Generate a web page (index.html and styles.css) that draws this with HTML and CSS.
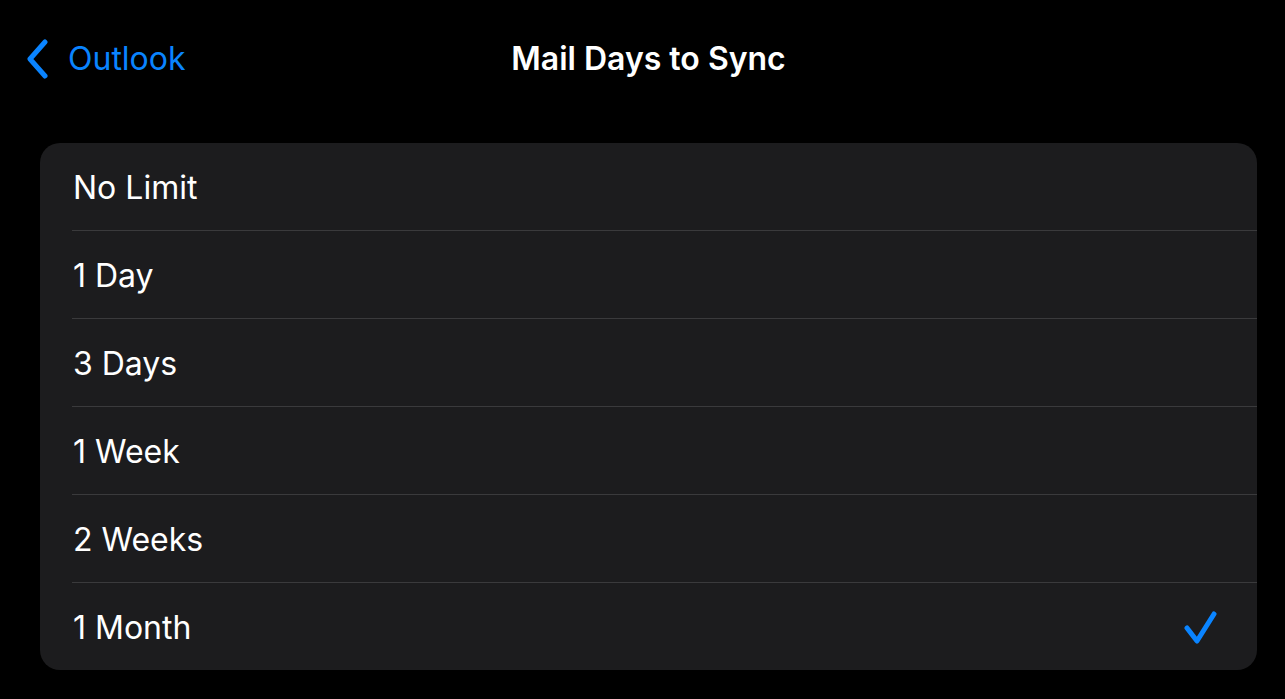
FILE: index.html
```html
<!DOCTYPE html>
<html>
<head>
<meta charset="utf-8">
<link rel="stylesheet" href="styles.css">
</head>
<body>
<div class="screen">
  <header class="navbar">
    <a class="back">
      <svg class="chev" width="24" height="40" viewBox="0 0 24 40"><path d="M20 3 L5 20 L20 37" fill="none" stroke="#0a84ff" stroke-width="5" stroke-linecap="round" stroke-linejoin="round"/></svg>
      <span class="back-label">Outlook</span>
    </a>
    <h1 class="title">Mail Days to Sync</h1>
  </header>
  <ul class="list">
    <li class="row"><span class="label">No Limit</span></li>
    <li class="row"><span class="label">1 Day</span></li>
    <li class="row"><span class="label">3 Days</span></li>
    <li class="row"><span class="label">1 Week</span></li>
    <li class="row"><span class="label">2 Weeks</span></li>
    <li class="row"><span class="label">1 Month</span>
      <svg class="check" width="36" height="36" viewBox="0 0 36 36"><path d="M3 18 L13 31 L30 4" fill="none" stroke="#0a84ff" stroke-width="5" stroke-linecap="round" stroke-linejoin="round"/></svg>
    </li>
  </ul>
</div>
</body>
</html>
```
FILE: styles.css
```css
html, body {
  margin: 0;
  padding: 0;
  background: #000;
}
body {
  font-family: Inter, "Noto Sans", "Liberation Sans", sans-serif;
  color: #fff;
  width: 1285px;
  height: 699px;
  overflow: hidden;
}
.screen {
  display: flex;
  flex-direction: column;
  padding: 0 28px 0 40px;
}
.navbar {
  position: relative;
  height: 143px;
  display: flex;
  align-items: flex-start;
}
.back {
  display: flex;
  align-items: center;
  gap: 19px;
  margin-left: -15px;
  margin-top: 39px;
  color: #0a84ff;
}
.back-label {
  font-size: 32px;
  line-height: 40px;
}
.title {
  position: absolute;
  left: 0;
  right: 0;
  top: 39px;
  margin: 0;
  text-align: center;
  font-size: 32px;
  font-weight: 600;
  line-height: 40px;
}
.list {
  list-style: none;
  margin: 0;
  padding: 0 0 0 32px;
  background: #1c1c1e;
  border-radius: 20px;
  overflow: hidden;
}
.row {
  height: 87px;
  display: flex;
  align-items: center;
  justify-content: space-between;
  padding-right: 37px;
  border-bottom: 1px solid #3a3a3c;
}
.row:last-child {
  border-bottom: none;
}
.label {
  font-size: 32px;
  padding-left: 1px;
  padding-top: 1px;
}
.check {
  margin-top: 2px;
}
```
